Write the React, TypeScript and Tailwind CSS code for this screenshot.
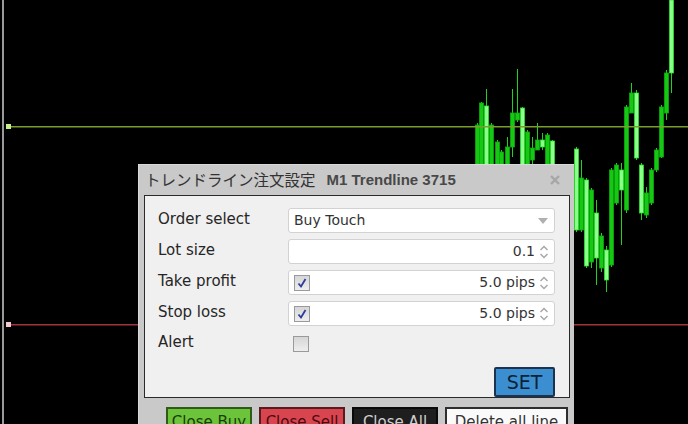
import { useState } from "react";

// [x, wickTop, wickBottom, bodyTop, bodyBottom, bright]
type Candle = [number, number, number, number, number, boolean];

const CANDLES: Candle[] = [
  [477, 123, 167, 125, 167, false],
  [481, 102, 167, 103, 165, false],
  [486, 89, 167, 106, 165, true],
  [491, 123, 167, 125, 167, false],
  [497, 140, 167, 142, 167, false],
  [501, 150, 167, 152, 167, false],
  [507, 137, 167, 147, 165, false],
  [512, 89, 157, 113, 147, false],
  [517, 69, 122, 113, 120, false],
  [522, 107, 167, 108, 167, true],
  [527, 130, 167, 132, 167, false],
  [532, 137, 165, 148, 160, false],
  [537, 123, 150, 140, 150, false],
  [542, 133, 150, 140, 147, true],
  [547, 133, 167, 135, 167, false],
  [552, 140, 167, 141, 167, true],
  [576, 147, 232, 149, 230, true],
  [581, 160, 232, 178, 230, false],
  [586, 178, 268, 180, 266, true],
  [591, 188, 268, 190, 262, false],
  [596, 200, 285, 213, 258, true],
  [601, 233, 272, 236, 268, false],
  [606, 246, 292, 250, 280, true],
  [611, 168, 267, 170, 265, false],
  [616, 163, 205, 165, 203, false],
  [621, 163, 245, 170, 190, true],
  [626, 105, 213, 107, 210, false],
  [631, 83, 113, 93, 113, false],
  [636, 90, 160, 93, 158, true],
  [641, 163, 220, 165, 213, true],
  [646, 187, 218, 193, 215, false],
  [651, 168, 205, 170, 203, false],
  [656, 148, 172, 150, 170, false],
  [661, 105, 158, 107, 157, false],
  [666, 70, 120, 73, 113, false],
  [671, 0, 93, 0, 73, true],
];

const Chart = () => (
  <svg className="absolute inset-0" width={688} height={424}>
    <rect x={2} y={0} width={2} height={424} fill="#9a9a9a" />
    {CANDLES.map(([x, wt, wb, bt, bb, bright]) => (
      <g key={x}>
        <rect x={x} y={wt} width={1} height={wb - wt} fill="#1fd21f" />
        <rect
          x={x - 1.5}
          y={bt}
          width={4}
          height={Math.max(bb - bt, 2)}
          fill={bright ? "#8dff8d" : "#14c814"}
          stroke={bright ? "#22e822" : "#0fa80f"}
          strokeWidth={0.8}
        />
      </g>
    ))}
    <rect x={6} y={126} width={682} height={1.5} fill="#7a9e2c" />
    <rect x={6} y={124} width={5} height={5} fill="#c8f08a" />
    <rect x={6} y={324} width={682} height={1.5} fill="#a3323f" />
    <rect x={6} y={322} width={5} height={5} fill="#f3c8cf" />
  </svg>
);

const Spinner = () => (
  <svg width="10" height="16" viewBox="0 0 10 16" className="ml-1">
    <path d="M1.5 6 L5 2.5 L8.5 6" fill="none" stroke="#a9a9a9" strokeWidth="1.5" />
    <path d="M1.5 10 L5 13.5 L8.5 10" fill="none" stroke="#a9a9a9" strokeWidth="1.5" />
  </svg>
);

const Check = ({ checked }: { checked: boolean }) => (
  <div className="w-[16px] h-[16px] border border-[#9a9a9a] bg-gradient-to-b from-[#d6d6d6] to-[#eeeeee] flex items-center justify-center">
    {checked && (
      <svg width="12" height="12" viewBox="0 0 12 12">
        <path d="M2.5 6.5 L5 9.5 L9.5 2" fill="none" stroke="#2b3d99" strokeWidth="1.8" />
      </svg>
    )}
  </div>
);

const Field = ({ children }: { children: React.ReactNode }) => (
  <div className="flex-1 h-[25px] bg-white border border-[#d2d2d2] rounded-[3px] flex items-center px-[5px] text-[14px] text-[#333]">
    {children}
  </div>
);

const Row = ({ label, children }: { label: string; children: React.ReactNode }) => (
  <div className="flex items-center h-[25px]">
    <span className="w-[130px] text-[15px] text-[#262626] -mt-[2px]">{label}</span>
    {children}
  </div>
);

export default function App() {
  const [tp] = useState(true);
  const [sl] = useState(true);
  const [alert] = useState(false);

  return (
    <div
      className="relative w-[688px] h-[424px] bg-black overflow-hidden"
      style={{ fontFamily: '"DejaVu Sans", sans-serif' }}
    >
      <Chart />

      <div className="absolute left-[138px] top-[164px] w-[436px] h-[270px] bg-[#c9c9c9] border-l border-t border-[#d9d9d9]">
        {/* title bar */}
        <div className="h-[30px] flex items-center pl-[6px] pr-[10px]">
          <span
            className="text-[15.5px] text-[#333]"
            style={{ fontFamily: '"Noto Sans CJK JP", sans-serif' }}
          >
            トレンドライン注文設定
          </span>
          <span
            className="ml-[11px] text-[15px] font-bold text-[#484848]"
            style={{ fontFamily: '"Liberation Sans", sans-serif' }}
          >
            M1 Trendline 3715
          </span>
          <svg width="12" height="12" viewBox="0 0 12 12" className="ml-auto mr-[3px]">
            <path d="M2 2 L10 10 M10 2 L2 10" stroke="#a6a6a6" strokeWidth="2.4" />
          </svg>
        </div>

        {/* form panel */}
        <div className="ml-[5px] w-[426px] h-[203px] bg-[#f0f0f0] border border-[#2a2a2a] pl-[13px] pr-[14px] pt-[12px] flex flex-col gap-[6px]">
          <Row label="Order select">
            <Field>
              <span>Buy Touch</span>
              <svg width="10" height="6" viewBox="0 0 10 6" className="ml-auto mr-[1px]">
                <path d="M0 0 H10 L5 6 Z" fill="#b0b0b0" />
              </svg>
            </Field>
          </Row>
          <Row label="Lot size">
            <Field>
              <span className="ml-auto">0.1</span>
              <Spinner />
            </Field>
          </Row>
          <Row label="Take profit">
            <Field>
              <Check checked={tp} />
              <span className="ml-auto">5.0 pips</span>
              <Spinner />
            </Field>
          </Row>
          <Row label="Stop loss">
            <Field>
              <Check checked={sl} />
              <span className="ml-auto">5.0 pips</span>
              <Spinner />
            </Field>
          </Row>
          <Row label="Alert">
            <div className="pl-[5px]">
              <Check checked={alert} />
            </div>
          </Row>
          <div className="flex justify-end mt-[6px]">
            <button className="w-[61px] h-[30px] bg-[#3b8fd0] border-2 border-[#1c3350] rounded-[2px] text-[19px] text-[#0d2236] leading-none">
              SET
            </button>
          </div>
        </div>

        {/* action buttons */}
        <div className="flex gap-[7px] pl-[27px] mt-[9px] text-[15px] leading-none whitespace-nowrap">
          <button className="w-[86px] h-[30px] px-0 bg-[#6cc43a] border-2 border-[#2f5a18] text-[#1d3a0c]">
            Close Buy
          </button>
          <button className="w-[86px] h-[30px] px-0 bg-[#d9454f] border-2 border-[#5a1a1e] text-[#4a0a10]">
            Close Sell
          </button>
          <button className="w-[86px] h-[30px] px-0 bg-[#1e1e1e] border-2 border-[#0a0a0a] text-[#cfcfcf]">
            Close All
          </button>
          <button className="w-[123px] h-[30px] px-0 bg-[#fafafa] border-2 border-[#2e2e2e] text-[#333]">
            Delete all line
          </button>
        </div>
      </div>
    </div>
  );
}
